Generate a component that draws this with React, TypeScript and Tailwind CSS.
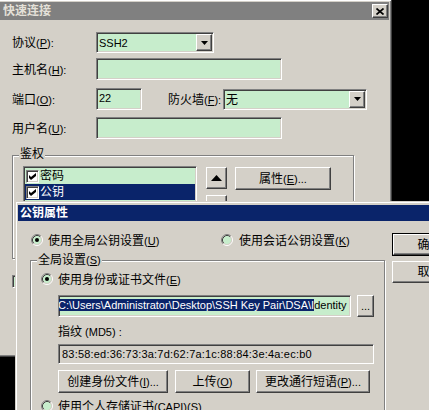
import React from 'react';

// classic win32 3d edges
const sunken = 'border border-t-[#808080] border-l-[#808080] border-r-white border-b-white shadow-[inset_1px_1px_0_#404040,inset_-1px_-1px_0_#d4d0c8]';
const raised = 'border border-t-white border-l-white border-r-[#404040] border-b-[#404040] shadow-[inset_-1px_-1px_0_#808080,inset_1px_1px_0_#d4d0c8]';
const etched = 'border border-[#808080] shadow-[inset_1px_1px_0_#fff,1px_1px_0_#fff]';

const Lbl = ({ t, k, tail = '' }: { t: string; k: string; tail?: string }) => (
    <span className="whitespace-nowrap">
        <span className="text-[12px]">{t}</span>
        <span className="text-[11px]">(<u>{k}</u>){tail}</span>
    </span>
);

const DropBtn = () => (
    <div className={`${raised} bg-[#d4d0c8] w-[16px] h-[17px] flex items-center justify-center shrink-0`}>
        <svg width="7" height="4" viewBox="0 0 7 4"><path d="M0 0h7L3.5 4z" fill="#000" /></svg>
    </div>
);

const Combo = ({ className, children }: { className: string; children: React.ReactNode }) => (
    <div className={`${sunken} bg-[#c7edcc] h-[21px] flex items-center p-[1px] ${className}`}>
        <span className="flex-1 pl-[1px] leading-[14px]">{children}</span>
        <DropBtn />
    </div>
);

const Field = ({ className }: { className: string }) => (
    <div className={`${sunken} bg-[#c7edcc] h-[22px] ${className}`} />
);

const Btn = ({ className, children }: { className: string; children?: React.ReactNode }) => (
    <div className={`${raised} bg-[#d4d0c8] flex items-center justify-center whitespace-nowrap ${className}`}>{children}</div>
);

const Radio = ({ on }: { on?: boolean }) => (
    <svg width="12" height="12" viewBox="0 0 12 12" className="shrink-0">
        <circle cx="6" cy="6" r="4.2" fill="#c7edcc" />
        <path d="M9.89 2.11A5.5 5.5 0 0 0 2.11 9.89" fill="none" stroke="#808080" />
        <path d="M2.11 9.89A5.5 5.5 0 0 0 9.89 2.11" fill="none" stroke="#fff" />
        <path d="M9.18 2.82A4.5 4.5 0 0 0 2.82 9.18" fill="none" stroke="#404040" />
        <path d="M2.82 9.18A4.5 4.5 0 0 0 9.18 2.82" fill="none" stroke="#d4d0c8" />
        {on && <circle cx="6" cy="6" r="2" fill="#000" />}
    </svg>
);

const Check = ({ on, className = 'bg-white' }: { on?: boolean; className?: string }) => (
    <span className={`${sunken} w-[13px] h-[13px] flex items-center justify-center shrink-0 ${className}`}>
        {on && (
            <svg width="7" height="7" viewBox="0 0 7 7"><polygon points="0,2 2,4 7,0 7,3 2,7 0,5" fill="#000" /></svg>
        )}
    </span>
);

const QuickConnect: React.FC = () => (
    <div className="absolute left-[-4px] top-[-1px] w-[396px] h-[358px] bg-[#d4d0c8] border border-t-[#d4d0c8] border-l-[#d4d0c8] border-r-[#404040] border-b-[#404040] shadow-[inset_1px_1px_0_#fff,inset_-1px_-1px_0_#808080] p-[2px] flex flex-col">
        {/* title bar (inactive) */}
        <div className="h-[18px] bg-[#808080] flex items-center justify-between pl-[4px] pr-[1px]">
            <span className="text-[12px] font-bold text-[#e4e0d8] leading-none">快速连接</span>
            <div className={`${raised} bg-[#d4d0c8] w-[16px] h-[14px] flex items-center justify-center`}>
                <svg width="8" height="7" viewBox="0 0 8 7"><path d="M0.5 0.5L7.5 6.5M7.5 0.5L0.5 6.5" stroke="#000" strokeWidth="1.7" /></svg>
            </div>
        </div>

        <div className="pl-[13px] text-black leading-[14px]">
            <div className="mt-[12px] h-[21px] flex items-center">
                <div className="w-[84px]"><Lbl t="协议" k="P" tail=":" /></div>
                <Combo className="w-[118px]"><span className="text-[11px]">SSH2</span></Combo>
            </div>
            <div className="mt-[5px] h-[22px] flex items-center">
                <div className="w-[84px]"><Lbl t="主机名" k="H" tail=":" /></div>
                <Field className="w-[186px]" />
            </div>
            <div className="mt-[8px] h-[22px] flex items-center">
                <div className="w-[84px]"><Lbl t="端口" k="O" tail=":" /></div>
                <div className={`${sunken} bg-[#c7edcc] h-[22px] w-[46px] pl-[2px] pt-[2px] text-[11px]`}>22</div>
                <div className="ml-[26px] w-[55px]"><Lbl t="防火墙" k="F" tail=":" /></div>
                <Combo className="w-[144px]"><span className="text-[12px]">无</span></Combo>
            </div>
            <div className="mt-[7px] h-[22px] flex items-center">
                <div className="w-[84px]"><Lbl t="用户名" k="U" tail=":" /></div>
                <Field className="w-[186px]" />
            </div>

            {/* 鉴权 */}
            <div className={`relative mt-[16px] w-[342px] h-[104px] ${etched}`}>
                <span className="absolute left-[6px] -top-[9px] bg-[#d4d0c8] px-[1px] text-[12px] leading-[14px]">鉴权</span>
                <div className="flex pt-[10px] pl-[10px]">
                    <div className={`${sunken} bg-[#c7edcc] w-[174px] h-[80px] p-[1px]`}>
                        <div className="h-[16px] flex items-center pl-[1px]">
                            <Check on />
                            <span className="text-[12px] ml-[1px]">密码</span>
                        </div>
                        <div className="h-[16px] flex items-center pl-[1px] bg-[#0a246a] text-white">
                            <Check on />
                            <span className="text-[12px] ml-[1px]">公钥</span>
                        </div>
                    </div>
                    <div className="ml-[9px] mt-[1px] flex flex-col">
                        <Btn className="w-[21px] h-[22px]">
                            <svg width="11" height="6" viewBox="0 0 11 6"><path d="M5.5 0L11 6H0z" fill="#000" /></svg>
                        </Btn>
                        <Btn className="mt-[6px] w-[21px] h-[22px]" />
                    </div>
                    <Btn className="ml-[8px] mt-[1px] w-[96px] h-[23px]">
                        <span className="text-[12px]">属性</span><span className="text-[11px]">(<u>E</u>)...</span>
                    </Btn>
                </div>
            </div>

            <div className="mt-[16px] h-[13px] flex items-center">
                <Check className="bg-[#c7edcc]" />
                <span className="ml-[4px]"><Lbl t="启动时显示快速连接" k="W" /></span>
            </div>
        </div>
    </div>
);

const PublicKeyDialog: React.FC = () => (
    <div className="absolute left-[15px] top-[201px] w-[470px] h-[260px] bg-[#d4d0c8] border border-t-[#d4d0c8] border-l-[#d4d0c8] border-r-[#404040] border-b-[#404040] shadow-[inset_1px_1px_0_#fff,inset_-1px_-1px_0_#808080] pt-[3px] px-[2px] flex flex-col text-black leading-[14px]">
        <div className="h-[18px] bg-[#0a246a] flex items-center pl-[2px]">
            <span className="text-[12px] font-bold text-white leading-none">公钥属性</span>
        </div>

        <div className="flex">
            <div className="w-[367px] pl-[12px]">
                <div className="mt-[12px] h-[14px] flex items-center">
                    <div className="w-[190px] ml-[1px] flex items-center gap-[5px]">
                        <Radio on /><Lbl t="使用全局公钥设置" k="U" />
                    </div>
                    <div className="flex items-center gap-[6px]">
                        <Radio /><Lbl t="使用会话公钥设置" k="K" />
                    </div>
                </div>

                {/* 全局设置 */}
                <div className={`relative mt-[13px] w-[355px] h-[200px] ${etched}`}>
                    <span className="absolute left-[6px] -top-[9px] bg-[#d4d0c8] px-[1px]"><Lbl t="全局设置" k="S" /></span>

                    <div className="mt-[11px] h-[14px] pl-[10px] flex items-center gap-[5px]">
                        <Radio on /><Lbl t="使用身份或证书文件" k="E" />
                    </div>

                    <div className="mt-[9px] pl-[27px] flex">
                        <div className={`${sunken} bg-[#c7edcc] w-[293px] h-[22px] p-[1px] overflow-hidden`}>
                            <div className="-ml-[2px] pt-[1px] whitespace-nowrap text-[11px] leading-[14px]">
                                <span className="bg-[#0a246a] text-white">C:\Users\Administrator\Desktop\SSH Key Pair\DSA\I</span>
                                <span>dentity</span>
                            </div>
                        </div>
                        <Btn className="ml-[6px] w-[17px] h-[22px] text-[11px]">...</Btn>
                    </div>

                    <div className="mt-[8px] h-[14px] pl-[27px] flex items-center">
                        <span className="text-[12px]">指纹</span><span className="text-[11px] whitespace-pre"> (MD5) :</span>
                    </div>

                    <div className="mt-[5px] pl-[27px]">
                        <div className={`${sunken} bg-[#d4d0c8] w-[316px] h-[20px] pl-[3px] pt-[2px] text-[11px] tracking-[0.2px]`}>
                            83:58:ed:36:73:3a:7d:62:7a:1c:88:84:3e:4a:ec:b0
                        </div>
                    </div>

                    <div className="mt-[6px] pl-[27px] flex">
                        <Btn className="w-[110px] h-[23px]"><Lbl t="创建身份文件" k="I" tail="..." /></Btn>
                        <Btn className="ml-[7px] w-[75px] h-[23px]"><Lbl t="上传" k="O" /></Btn>
                        <Btn className="ml-[6px] w-[114px] h-[23px]"><Lbl t="更改通行短语" k="P" tail="..." /></Btn>
                    </div>

                    <div className="mt-[6px] h-[14px] pl-[10px] flex items-center gap-[5px]">
                        <Radio /><span className="whitespace-nowrap"><span className="text-[12px]">使用个人存储证书</span><span className="text-[11px]">(CAPI)(<u>S</u>)</span></span>
                    </div>
                </div>
            </div>

            <div className="ml-[7px] flex flex-col">
                <div className="mt-[12px] border border-black">
                    <Btn className="w-[73px] h-[21px] text-[12px]">确定</Btn>
                </div>
                <Btn className="mt-[5px] w-[75px] h-[22px] text-[12px]">取消</Btn>
            </div>
        </div>
    </div>
);

const App: React.FC = () => (
    <div className="relative w-[429px] h-[410px] overflow-hidden bg-black font-['Liberation_Sans','Noto_Sans_CJK_SC',sans-serif]">
        <QuickConnect />
        <PublicKeyDialog />
    </div>
);

export default App;
